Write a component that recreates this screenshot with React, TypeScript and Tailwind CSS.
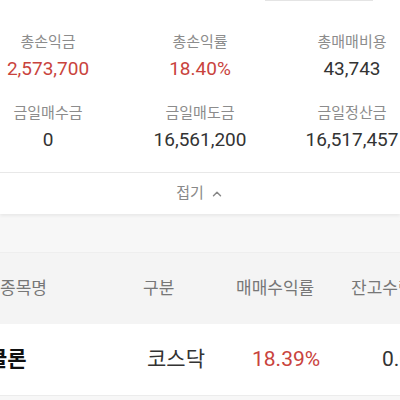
import { ChevronUp } from 'lucide-react'

const font = "font-['Roboto','Noto_Sans_CJK_KR',sans-serif]"

const summary = [
  [
    { label: '총손익금', value: '2,573,700', red: true },
    { label: '총손익률', value: '18.40%', red: true },
    { label: '총매매비용', value: '43,743' },
  ],
  [
    { label: '금일매수금', value: '0' },
    { label: '금일매도금', value: '16,561,200' },
    { label: '금일정산금', value: '16,517,457' },
  ],
]

export default function App() {
  return (
    <div className={`w-[400px] h-[400px] overflow-hidden bg-[#f7f7f7] ${font}`}>
      {/* Summary */}
      <div className="bg-white">
        <div className="h-[1px] ml-[265px] w-[108px] bg-[#e4e4e4]" />
        <div className="w-[456px] -ml-[28px] pt-[30px]">
          {summary.map((row, i) => (
            <div key={i} className={`grid grid-cols-3 ${i === 0 ? 'h-[71px]' : 'h-[70px]'}`}>
              {row.map((item) => (
                <div key={item.label} className="flex flex-col items-center">
                  <span className="text-[15px] leading-[22px] text-[#8c8c8c]">{item.label}</span>
                  <span
                    className={`text-[19px] leading-[31px] whitespace-nowrap ${
                      item.red ? 'text-[#c9433d]' : 'text-[#333333]'
                    }`}
                  >
                    {item.value}
                  </span>
                </div>
              ))}
            </div>
          ))}
        </div>
        <div className="border-t border-[#e8e8e8] h-[42px] flex items-center justify-center gap-1.5 shadow-[0_2px_3px_rgba(0,0,0,0.06)]">
          <span className="text-[15px] text-[#888888]">접기</span>
          <ChevronUp className="w-3.5 h-3.5 text-[#888888]" strokeWidth={2.5} />
        </div>
      </div>

      <div className="h-[38px]" />

      {/* Table header */}
      <div className="h-[72px] bg-[#f4f4f4] border-t border-[#eeeeee] flex items-center text-[17px] text-[#777777] whitespace-nowrap">
        <span className="w-[143px] shrink-0">종목명</span>
        <span className="w-[93px] shrink-0">구분</span>
        <span className="w-[115px] shrink-0">매매수익률</span>
        <span className="shrink-0">잔고수량</span>
      </div>

      {/* Row */}
      <div className="h-[72px] bg-white border-b border-[#ececec] flex items-center text-[21px] whitespace-nowrap">
        <span className="w-[159px] shrink-0 -ml-[12px] font-bold text-[#111111]">클론</span>
        <span className="w-[105px] shrink-0 text-[#333333]">코스닥</span>
        <span className="w-[130px] shrink-0 text-[#c9433d]">18.39%</span>
        <span className="shrink-0 text-[#333333]">0.00%</span>
      </div>
    </div>
  )
}
